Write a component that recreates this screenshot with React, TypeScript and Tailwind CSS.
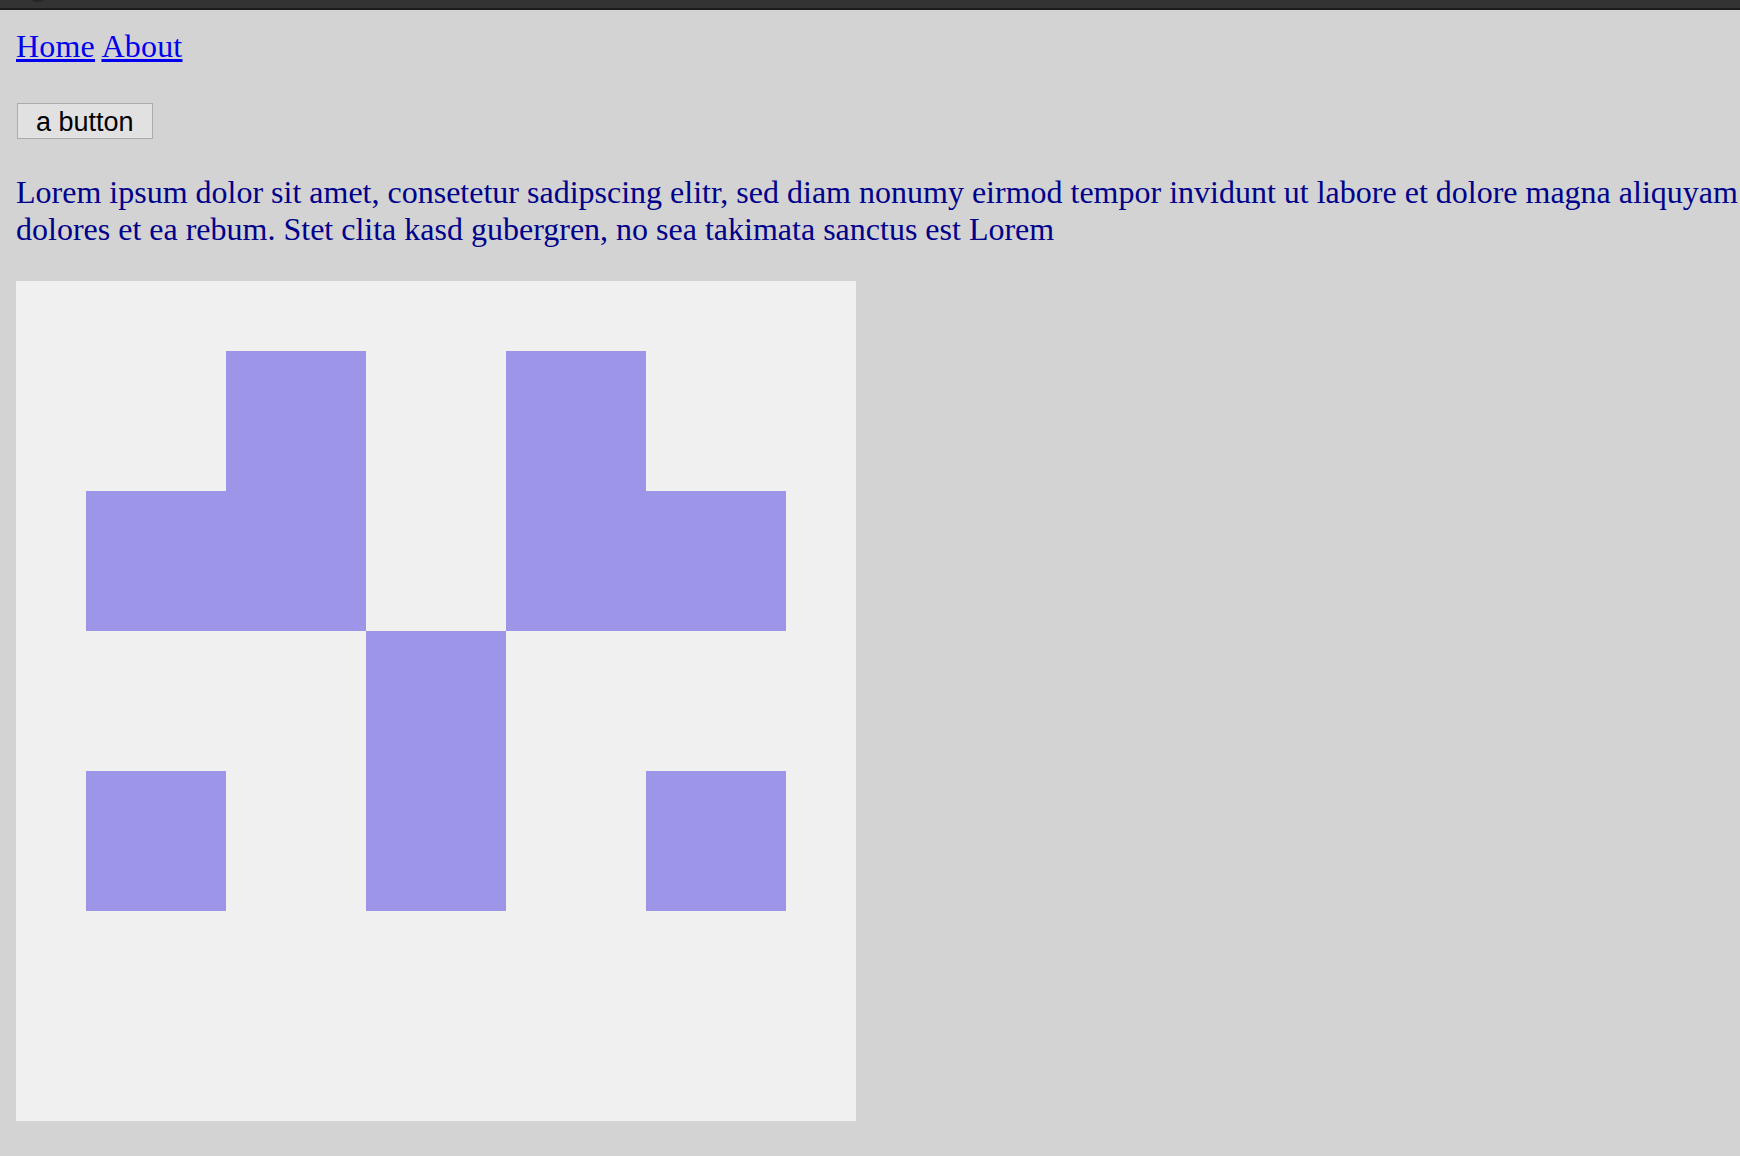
import React from "react";

// 5x5 identicon, 1 = filled cell
const cells: number[][] = [
  [0, 1, 0, 1, 0],
  [1, 1, 0, 1, 1],
  [0, 0, 1, 0, 0],
  [1, 0, 1, 0, 1],
  [0, 0, 0, 0, 0],
];

function Identicon() {
  return (
    <svg width="840" height="840" viewBox="0 0 840 840" className="block">
      <rect width="840" height="840" fill="#f0f0f0" />
      {cells.map((row, r) =>
        row.map((on, c) =>
          on ? (
            <rect
              key={`${r}-${c}`}
              x={70 + c * 140}
              y={70 + r * 140}
              width="140"
              height="140"
              fill="#9d96e8"
            />
          ) : null
        )
      )}
    </svg>
  );
}

export default function App() {
  return (
    <div className="min-h-[1156px] bg-[#d3d3d3]">
      {/* top strip */}
      <div className="relative h-[10px] overflow-hidden border-b-2 border-[#1c1c1c] bg-[#333333]">
        <div className="absolute left-[26px] top-[-22px] h-6 w-6 rounded-full bg-[#262626]" />
      </div>

      <div className="pl-4 pt-[18px]">
        <nav className="font-['Liberation_Serif',serif] text-[32px] leading-[36.8px] tracking-[0.2px]">
          <a href="#" className="text-[#0000ee] underline">Home</a>{" "}
          <a href="#" className="text-[#0000ee] underline">About</a>
        </nav>

        <button className="mt-[38px] ml-px flex h-[36px] items-center border border-[#ababab] bg-[#e1e1e1] px-[18px] pt-[4px] font-['Liberation_Sans',sans-serif] text-[27px] leading-none text-black">
          a button
        </button>

        <p className="mt-[35px] font-['Liberation_Serif',serif] text-[32px] leading-[36.8px] text-[#00008b]">
          Lorem ipsum dolor sit amet, consetetur sadipscing elitr, sed diam nonumy eirmod tempor invidunt ut labore et dolore magna aliquyam dolores et ea rebum. Stet clita kasd gubergren, no sea takimata sanctus est Lorem
        </p>

        <div className="mt-[34px] w-[840px]">
          <Identicon />
        </div>
      </div>
    </div>
  );
}
